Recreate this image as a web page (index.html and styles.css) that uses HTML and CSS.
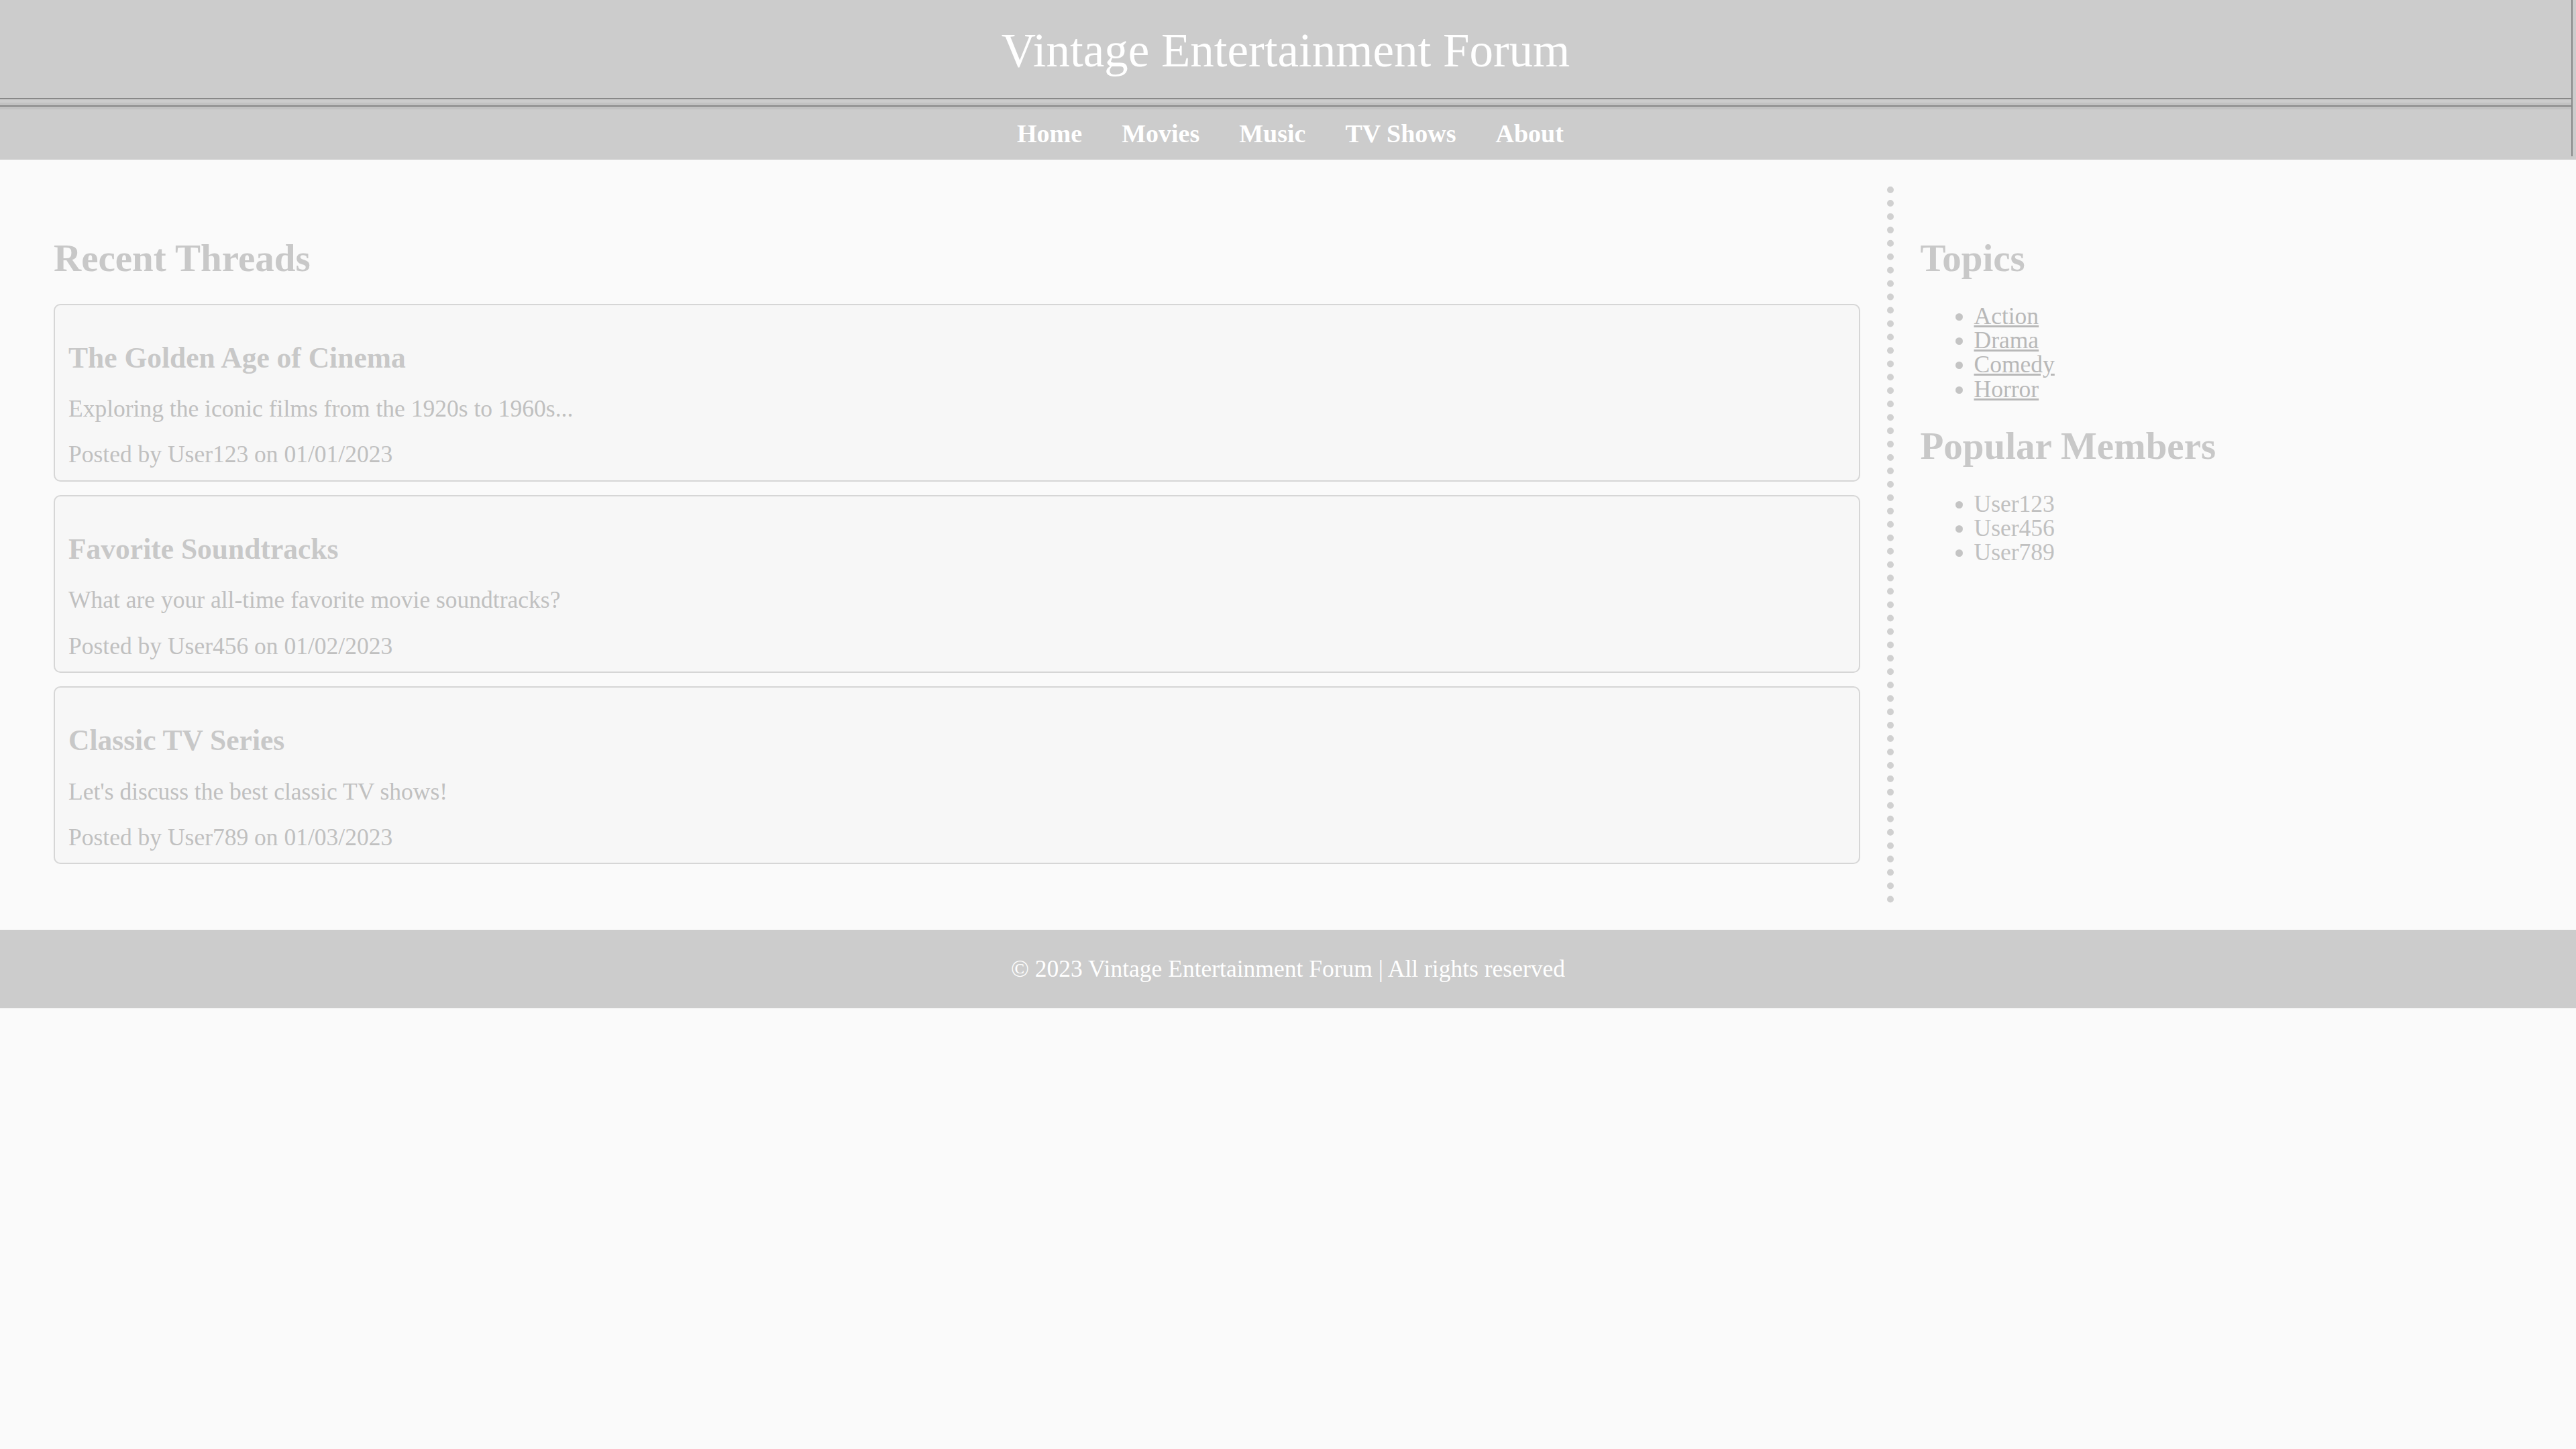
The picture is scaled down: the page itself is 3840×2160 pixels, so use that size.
FILE: index.html
```html
<!DOCTYPE html>
<html lang="en">
<head>
<meta charset="utf-8">
<title>Vintage Entertainment Forum</title>
<link rel="stylesheet" href="styles.css">
</head>
<body>
<header class="site-header">
  <div class="frame">
    <h1 class="site-title">Vintage Entertainment Forum</h1>
    <div class="rule"></div>
    <nav class="main-nav">
      <a href="#">Home</a>
      <a href="#">Movies</a>
      <a href="#">Music</a>
      <a href="#">TV Shows</a>
      <a href="#">About</a>
    </nav>
  </div>
</header>
<main class="layout">
  <section class="threads">
    <h2>Recent Threads</h2>
    <article class="thread">
      <h3>The Golden Age of Cinema</h3>
      <p>Exploring the iconic films from the 1920s to 1960s...</p>
      <p class="meta">Posted by User123 on 01/01/2023</p>
    </article>
    <article class="thread">
      <h3>Favorite Soundtracks</h3>
      <p>What are your all-time favorite movie soundtracks?</p>
      <p class="meta">Posted by User456 on 01/02/2023</p>
    </article>
    <article class="thread">
      <h3>Classic TV Series</h3>
      <p>Let's discuss the best classic TV shows!</p>
      <p class="meta">Posted by User789 on 01/03/2023</p>
    </article>
  </section>
  <aside class="sidebar">
    <h2>Topics</h2>
    <ul class="topic-list">
      <li><a href="#">Action</a></li>
      <li><a href="#">Drama</a></li>
      <li><a href="#">Comedy</a></li>
      <li><a href="#">Horror</a></li>
    </ul>
    <h2>Popular Members</h2>
    <ul class="member-list">
      <li>User123</li>
      <li>User456</li>
      <li>User789</li>
    </ul>
  </aside>
</main>
<footer class="site-footer">
  <p>&copy; 2023 Vintage Entertainment Forum | All rights reserved</p>
</footer>
</body>
</html>
```

FILE: styles.css
```css
html {
  background: #fafafa;
}

body {
  margin: 0;
  background: #fafafa;
  font-family: "Liberation Serif", "Times New Roman", serif;
  font-size: 35.5px;
  line-height: 36.4px;
  color: #c0c0c0;
}

.site-header {
  background: #cccccc;
  color: #ffffff;
  text-align: center;
  padding-bottom: 5px;
}

.frame {
  border-right: 2px solid #888888;
  margin-right: 5px;
  padding-top: 35px;
}

.site-title {
  margin: 0;
  font-size: 71px;
  line-height: 80px;
  font-weight: normal;
  color: #ffffff;
}

.rule {
  margin-top: 31px;
  height: 17px;
  background: linear-gradient(to bottom,
    #888888 0, #888888 2px,
    #cccccc 2px, #cccccc 7px,
    #c2c2c2 7px, #c2c2c2 11px,
    #888888 11px, #888888 13px,
    #c2c2c2 13px, #c2c2c2 17px);
}

.main-nav {
  display: flex;
  justify-content: center;
  gap: 59px;
  padding: 15px 0 12px 14px;
  font-size: 38px;
  line-height: 43px;
  font-weight: bold;
}

.main-nav a {
  color: #ffffff;
  text-decoration: none;
}

.layout {
  display: flex;
  align-items: stretch;
  padding: 40px;
}

.threads {
  flex: 3 1 0;
  padding: 40px 40px 38px;
}

.sidebar {
  flex: 1 1 0;
  padding: 40px;
  border-left: 10px dotted #d0d0d0;
}

h2 {
  margin: 40px 0;
  font-size: 57px;
  line-height: 54.5px;
  font-weight: bold;
  color: #c8c8c8;
}

.thread {
  background: #f7f7f7;
  border: 2px solid #d6d6d6;
  border-radius: 10px;
  padding: 20px;
  margin-bottom: 20px;
}

.thread h3 {
  margin: 37px 0;
  font-size: 43.5px;
  line-height: 42.5px;
  font-weight: bold;
  color: #c8c8c8;
}

.thread p {
  margin: 32px 0;
  color: #c0c0c0;
}

.thread p.meta {
  margin-bottom: 0;
}

ul {
  margin: 32px 0;
  padding-left: 80px;
}

.topic-list a {
  color: #b8b8b8;
  text-decoration: underline;
}

.member-list li {
  color: #c0c0c0;
}

li::marker {
  color: #c4c4c4;
}

.site-footer {
  background: #cccccc;
  color: #ffffff;
  text-align: center;
  padding: 40px;
}

.site-footer p {
  margin: 0;
}
```
